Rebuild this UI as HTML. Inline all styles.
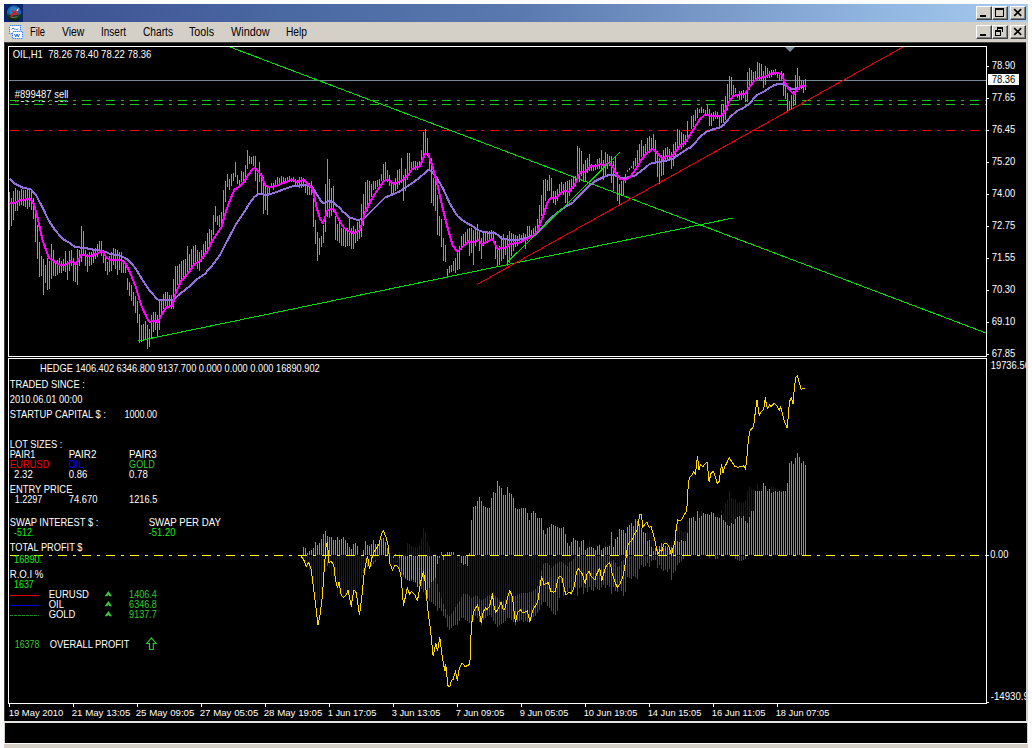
<!DOCTYPE html>
<html lang="en">
<head>
<meta charset="utf-8">
<title>MetaTrader - OIL,H1</title>
<style>
html,body{margin:0;padding:0;background:#fcfcfc;}
body{width:1032px;height:748px;overflow:hidden;position:relative;font-family:"Liberation Sans",sans-serif;}
.win{position:absolute;left:4px;top:4px;width:1024px;height:744px;background:#d4d0c8;overflow:hidden;}
.title{position:absolute;left:0;top:0;width:1024px;height:18px;background:linear-gradient(90deg,#3b5090 0px,#445c9a 150px,#4b6aa4 300px,#5a79af 516px,#7898c8 700px,#8fb4de 860px,#a6caf0 1024px);}
.appicon{position:absolute;left:0;top:0;width:19px;height:18px;background:#0a2472;}
.menubar{position:absolute;left:0;top:18px;width:1024px;height:20px;background:#d4d0c8;}
.menubar span{position:absolute;top:4px;font-size:12px;line-height:14px;color:#000;white-space:nowrap;}
.btn{position:absolute;width:16px;height:14px;background:#d4d0c8;box-sizing:border-box;border:1px solid;border-color:#fff #404040 #404040 #fff;box-shadow:inset -1px -1px 0 #808080;}
.client{position:absolute;left:0;top:38px;width:1022px;height:679px;background:#000;border-left:1px solid #404040;box-sizing:border-box;}
.clienttop{position:absolute;left:0;top:38px;width:1022px;height:1px;background:#404040;}
.sep{position:absolute;left:0;top:717px;width:1024px;height:2px;background:#e6e4de;}
.status{position:absolute;left:1px;top:719px;width:1022px;height:20px;background:#000;}
.statusline{position:absolute;left:0;top:739px;width:1024px;height:1px;background:#fff;}
svg{position:absolute;left:0;top:0;}
svg text{font-family:"Liberation Sans",sans-serif;}
</style>
</head>
<body>
<div class="win">
  <div class="title">
    <div class="appicon">
      <svg width="19" height="18" viewBox="0 0 19 18">
        <circle cx="9.800" cy="8.800" r="8" fill="#0a1230"/>
        <circle cx="10" cy="8.600" r="7.300" fill="#1a62ae"/>
        <circle cx="9.500" cy="7" r="4" fill="#2a86c8" opacity="0.8"/>
        <path d="M2.400 9.800q7.500 3 15.200 0a7.600 7.600 0 0 1-15.200 0z" fill="#0b3f20"/>
        <path d="M3 12.500q7 4.500 13.500 1l-1.500 2.200q-5 2.600-10-0.200z" fill="#06240f"/>
        <path d="M5.600 12.800l3.600-4.200-2.800-3 3.900 1.900 3.900-3.600-2.100 4.500 3.100 3.200-4.300-1.400-2.600 2.300z" fill="#e41414"/>
        <path d="M12.200 6.400l2.800-2.800-1.200 3.600z" fill="#ffffff"/>
        <path d="M7 13.200q3 0.800 6.500-0.600" stroke="#8a7a7a" stroke-width="0.800" fill="none"/>
      </svg>
    </div>
    <div class="btn" style="left:972px;top:2px"><svg width="14" height="12"><rect x="3" y="8" width="6" height="2" fill="#000"/></svg></div>
    <div class="btn" style="left:988px;top:2px"><svg width="14" height="12"><path d="M2 1h9v9h-9zM3 3v6h7v-6z" fill="#000" fill-rule="evenodd"/></svg></div>
    <div class="btn" style="left:1006px;top:2px"><svg width="14" height="12"><path d="M3.200 2.200l7 6.600M10.200 2.200l-7 6.600" stroke="#000" stroke-width="1.700" fill="none"/></svg></div>
  </div>
  <div class="menubar">
    <svg width="20" height="18" style="left:4px;top:2px" viewBox="0 0 20 18">
      <rect x="1.500" y="1.500" width="11" height="8" fill="#fff" stroke="#3c84ff" stroke-dasharray="1 1" shape-rendering="crispEdges"/>
      <rect x="1.500" y="1.500" width="11" height="8" fill="none" stroke="#9cc4ff" stroke-dasharray="1 1" stroke-dashoffset="1" shape-rendering="crispEdges"/>
      <path d="M3.500 5.500l1.500-1.500 1.500 1.500M7 4.500l1.500 1.500 1.500-1.500" stroke="#3a78e8" fill="none"/>
      <rect x="4.500" y="7.500" width="10" height="7" fill="#fff" stroke="#3c84ff" stroke-dasharray="1 1" shape-rendering="crispEdges"/>
      <rect x="4.500" y="7.500" width="10" height="7" fill="none" stroke="#9cc4ff" stroke-dasharray="1 1" stroke-dashoffset="1" shape-rendering="crispEdges"/>
      <path d="M6.500 10l1.200 3 1.300-3 1.300 3 1.200-3" stroke="#2a68e0" fill="none"/>
    </svg>
    <span style="left:26.4px;width:15.0px" class="mi"><svg width="17" height="16" style="overflow:visible"><text x="0" y="10.2" font-size="12.3" textLength="15.0" lengthAdjust="spacingAndGlyphs">File</text></svg></span>
    <span style="left:58.4px;width:22.3px" class="mi"><svg width="24" height="16" style="overflow:visible"><text x="0" y="10.2" font-size="12.3" textLength="22.3" lengthAdjust="spacingAndGlyphs">View</text></svg></span>
    <span style="left:97.4px;width:25.0px" class="mi"><svg width="27" height="16" style="overflow:visible"><text x="0" y="10.2" font-size="12.3" textLength="25.0" lengthAdjust="spacingAndGlyphs">Insert</text></svg></span>
    <span style="left:138.6px;width:30.0px" class="mi"><svg width="32" height="16" style="overflow:visible"><text x="0" y="10.2" font-size="12.3" textLength="30.0" lengthAdjust="spacingAndGlyphs">Charts</text></svg></span>
    <span style="left:185.3px;width:25.0px" class="mi"><svg width="27" height="16" style="overflow:visible"><text x="0" y="10.2" font-size="12.3" textLength="25.0" lengthAdjust="spacingAndGlyphs">Tools</text></svg></span>
    <span style="left:226.9px;width:38.7px" class="mi"><svg width="40" height="16" style="overflow:visible"><text x="0" y="10.2" font-size="12.3" textLength="38.7" lengthAdjust="spacingAndGlyphs">Window</text></svg></span>
    <span style="left:282.2px;width:21.0px" class="mi"><svg width="23" height="16" style="overflow:visible"><text x="0" y="10.2" font-size="12.3" textLength="21.0" lengthAdjust="spacingAndGlyphs">Help</text></svg></span>
    <div class="btn" style="left:972px;top:3px"><svg width="14" height="12"><rect x="3" y="8" width="6" height="2" fill="#000"/></svg></div>
    <div class="btn" style="left:988px;top:3px"><svg width="14" height="12"><path d="M4 1h6v5h-1v-3h-4v1h-1zM2 4h6v6h-6zM3 6v3h4v-3z" fill="#000" fill-rule="evenodd"/></svg></div>
    <div class="btn" style="left:1006px;top:3px"><svg width="14" height="12"><path d="M3.200 2.200l7 6.600M10.200 2.200l-7 6.600" stroke="#000" stroke-width="1.700" fill="none"/></svg></div>
  </div>
  <div class="client"></div>
  <div class="clienttop"></div>
  <div class="sep"></div>
  <div class="status"></div>
  <div class="statusline"></div>
</div>
<svg width="1032" height="748" viewBox="0 0 1032 748" font-family="Liberation Sans, sans-serif">
<g shape-rendering="crispEdges">
<rect x="9" y="80" width="977" height="1" fill="#778899"/>
<line x1="10" y1="100.5" x2="986" y2="100.5" stroke="#22c022" stroke-width="1" stroke-dasharray="9 6 3 6"/>
<line x1="10" y1="104.5" x2="986" y2="104.5" stroke="#22c022" stroke-width="1" stroke-dasharray="9 6 3 6"/>
<line x1="10" y1="130.5" x2="986" y2="130.5" stroke="#ff0000" stroke-width="1" stroke-dasharray="9 6 3 6"/>
</g>
<clipPath id="c1"><rect x="9" y="47" width="977" height="309"/></clipPath>
<clipPath id="c2"><rect x="9" y="359" width="977" height="344"/></clipPath>
<g clip-path="url(#c1)">
<path d="M9 192v38h1v-38zM11 198v28h1v-28zM13 191v29h1v-29zM15 188v23h1v-23zM17 190v21h1v-21zM19 191v15h1v-15zM21 189v16h1v-16zM23 190v16h1v-16zM25 190v17h1v-17zM27 188v21h1v-21zM29 190v17h1v-17zM31 189v21h1v-21zM33 198v21h1v-21zM35 210v32h1v-32zM37 225v34h1v-34zM39 242v35h1v-35zM41 256v20h1v-20zM43 259v36h1v-36zM45 265v18h1v-18zM47 258v32h1v-32zM49 261v28h1v-28zM51 244v35h1v-35zM53 250v26h1v-26zM55 262v14h1v-14zM57 260v15h1v-15zM59 258v15h1v-15zM61 261v12h1v-12zM63 259v12h1v-12zM65 251v21h1v-21zM67 261v19h1v-19zM69 251v20h1v-20zM71 250v16h1v-16zM73 258v23h1v-23zM75 264v18h1v-18zM77 249v36h1v-36zM79 250v16h1v-16zM81 226v36h1v-36zM83 231v24h1v-24zM85 250v16h1v-16zM87 254v18h1v-18zM89 252v14h1v-14zM91 252v13h1v-13zM93 251v12h1v-12zM95 248v11h1v-11zM97 244v13h1v-13zM99 241v12h1v-12zM101 241v15h1v-15zM103 250v13h1v-13zM105 258v13h1v-13zM107 262v13h1v-13zM109 256v16h1v-16zM111 252v19h1v-19zM113 248v17h1v-17zM115 249v20h1v-20zM117 250v25h1v-25zM119 252v18h1v-18zM121 252v21h1v-21zM123 260v13h1v-13zM125 262v11h1v-11zM127 278v12h1v-12zM129 282v14h1v-14zM131 285v16h1v-16zM133 292v14h1v-14zM135 296v17h1v-17zM137 301v22h1v-22zM139 314v29h1v-29zM141 325v17h1v-17zM143 324v17h1v-17zM145 321v18h1v-18zM147 325v24h1v-24zM149 329v18h1v-18zM151 315v24h1v-24zM153 312v20h1v-20zM155 312v18h1v-18zM157 315v22h1v-22zM159 301v29h1v-29zM161 300v16h1v-16zM163 294v15h1v-15zM165 292v14h1v-14zM167 292v14h1v-14zM169 295v11h1v-11zM171 295v14h1v-14zM173 279v30h1v-30zM175 266v27h1v-27zM177 266v19h1v-19zM179 264v19h1v-19zM181 261v20h1v-20zM183 260v17h1v-17zM185 259v17h1v-17zM187 246v29h1v-29zM189 254v17h1v-17zM191 249v18h1v-18zM193 246v20h1v-20zM195 245v20h1v-20zM197 250v19h1v-19zM199 252v19h1v-19zM201 250v12h1v-12zM203 244v15h1v-15zM205 241v14h1v-14zM207 233v18h1v-18zM209 229v17h1v-17zM211 230v12h1v-12zM213 215v20h1v-20zM215 206v16h1v-16zM217 216v9h1v-9zM219 215v12h1v-12zM221 212v13h1v-13zM223 190v29h1v-29zM225 181v21h1v-21zM227 174v13h1v-13zM229 179v11h1v-11zM231 174v12h1v-12zM233 173v8h1v-8zM235 162v15h1v-15zM237 175v9h1v-9zM239 180v6h1v-6zM241 171v11h1v-11zM243 172v11h1v-11zM245 165v17h1v-17zM247 150v19h1v-19zM249 156v8h1v-8zM251 157v7h1v-7zM253 156v10h1v-10zM255 156v25h1v-25zM257 173v21h1v-21zM259 162v20h1v-20zM261 173v20h1v-20zM263 177v37h1v-37zM265 185v25h1v-25zM267 185v30h1v-30zM269 187v8h1v-8zM271 183v5h1v-5zM273 183v7h1v-7zM275 180v7h1v-7zM277 177v9h1v-9zM279 178v6h1v-6zM281 176v8h1v-8zM283 177v6h1v-6zM285 178v4h1v-4zM287 177v5h1v-5zM289 176v6h1v-6zM291 178v4h1v-4zM293 177v5h1v-5zM295 179v7h1v-7zM297 180v7h1v-7zM299 177v11h1v-11zM301 177v11h1v-11zM303 178v9h1v-9zM305 185v8h1v-8zM307 186v9h1v-9zM309 183v12h1v-12zM311 181v14h1v-14zM313 198v29h1v-29zM315 220v24h1v-24zM317 232v29h1v-29zM319 238v17h1v-17zM321 236v11h1v-11zM323 225v18h1v-18zM325 184v48h1v-48zM327 159v58h1v-58zM329 179v39h1v-39zM331 188v28h1v-28zM333 186v26h1v-26zM335 216v24h1v-24zM337 224v17h1v-17zM339 222v21h1v-21zM341 228v18h1v-18zM343 226v20h1v-20zM345 229v18h1v-18zM347 228v18h1v-18zM349 218v28h1v-28zM351 228v21h1v-21zM353 226v23h1v-23zM355 229v14h1v-14zM357 222v19h1v-19zM359 220v19h1v-19zM361 204v33h1v-33zM363 194v32h1v-32zM365 182v31h1v-31zM367 180v31h1v-31zM369 181v22h1v-22zM371 184v13h1v-13zM373 181v9h1v-9zM375 181v8h1v-8zM377 180v7h1v-7zM379 179v7h1v-7zM381 174v7h1v-7zM383 164v19h1v-19zM385 162v17h1v-17zM387 170v12h1v-12zM389 175v11h1v-11zM391 182v13h1v-13zM393 184v9h1v-9zM395 178v13h1v-13zM397 170v19h1v-19zM399 169v16h1v-16zM401 158v25h1v-25zM403 175v26h1v-26zM405 169v22h1v-22zM407 153v27h1v-27zM409 153v20h1v-20zM411 162v9h1v-9zM413 161v9h1v-9zM415 161v9h1v-9zM417 162v8h1v-8zM419 161v6h1v-6zM421 150v15h1v-15zM423 132v28h1v-28zM425 129v24h1v-24zM427 138v18h1v-18zM429 156v13h1v-13zM431 158v45h1v-45zM433 178v28h1v-28zM435 180v31h1v-31zM437 195v40h1v-40zM439 216v20h1v-20zM441 219v28h1v-28zM443 238v23h1v-23zM445 245v17h1v-17zM447 269v7h1v-7zM449 266v7h1v-7zM451 265v7h1v-7zM453 261v10h1v-10zM455 258v15h1v-15zM457 252v18h1v-18zM459 246v23h1v-23zM461 236v14h1v-14zM463 234v13h1v-13zM465 232v14h1v-14zM467 229v14h1v-14zM469 228v28h1v-28zM471 228v25h1v-25zM473 230v35h1v-35zM475 229v17h1v-17zM477 224v18h1v-18zM479 230v21h1v-21zM481 238v21h1v-21zM483 232v14h1v-14zM485 231v12h1v-12zM487 232v11h1v-11zM489 231v10h1v-10zM491 230v10h1v-10zM493 231v12h1v-12zM495 241v18h1v-18zM497 250v16h1v-16zM499 246v19h1v-19zM501 236v25h1v-25zM503 234v25h1v-25zM505 238v17h1v-17zM507 235v31h1v-31zM509 231v32h1v-32zM511 233v23h1v-23zM513 234v17h1v-17zM515 235v12h1v-12zM517 236v10h1v-10zM519 234v9h1v-9zM521 235v8h1v-8zM523 233v8h1v-8zM525 234v15h1v-15zM527 226v15h1v-15zM529 226v13h1v-13zM531 230v9h1v-9zM533 228v8h1v-8zM535 226v9h1v-9zM537 219v13h1v-13zM539 205v24h1v-24zM541 195v21h1v-21zM543 180v31h1v-31zM545 179v22h1v-22zM547 180v11h1v-11zM549 175v16h1v-16zM551 178v19h1v-19zM553 191v12h1v-12zM555 191v14h1v-14zM557 189v12h1v-12zM559 184v12h1v-12zM561 182v11h1v-11zM563 184v11h1v-11zM565 182v21h1v-21zM567 181v24h1v-24zM569 180v16h1v-16zM571 179v12h1v-12zM573 176v13h1v-13zM575 176v10h1v-10zM577 146v35h1v-35zM579 148v34h1v-34zM581 151v25h1v-25zM583 164v18h1v-18zM585 160v22h1v-22zM587 158v15h1v-15zM589 154v17h1v-17zM591 164v7h1v-7zM593 165v6h1v-6zM595 164v6h1v-6zM597 159v10h1v-10zM599 158v11h1v-11zM601 150v21h1v-21zM603 160v20h1v-20zM605 152v23h1v-23zM607 154v15h1v-15zM609 156v10h1v-10zM611 156v27h1v-27zM613 161v30h1v-30zM615 157v20h1v-20zM617 172v29h1v-29zM619 184v22h1v-22zM621 181v15h1v-15zM623 178v17h1v-17zM625 174v9h1v-9zM627 170v2h1v-2zM629 168v2h1v-2zM631 166v2h1v-2zM633 161v8h1v-8zM635 158v8h1v-8zM637 150v15h1v-15zM639 144v17h1v-17zM641 140v17h1v-17zM643 146v10h1v-10zM645 144v9h1v-9zM647 138v14h1v-14zM649 136v17h1v-17zM651 138v13h1v-13zM653 134v16h1v-16zM655 140v21h1v-21zM657 151v26h1v-26zM659 158v26h1v-26zM661 155v21h1v-21zM663 150v25h1v-25zM665 148v12h1v-12zM667 147v12h1v-12zM669 149v10h1v-10zM671 152v17h1v-17zM673 144v22h1v-22zM675 142v14h1v-14zM677 129v22h1v-22zM679 130v17h1v-17zM681 132v17h1v-17zM683 134v13h1v-13zM685 135v10h1v-10zM687 121v21h1v-21zM691 116v13h1v-13zM693 115v12h1v-12zM695 110v11h1v-11zM697 108v10h1v-10zM699 109v4h1v-4zM701 107v6h1v-6zM703 109v4h1v-4zM705 110v5h1v-5zM707 105v11h1v-11zM709 109v17h1v-17zM711 113v13h1v-13zM713 112v9h1v-9zM715 111v8h1v-8zM717 112v7h1v-7zM719 116v11h1v-11zM721 104v19h1v-19zM723 104v19h1v-19zM725 96v24h1v-24zM727 84v26h1v-26zM729 76v23h1v-23zM731 77v18h1v-18zM733 85v11h1v-11zM735 88v5h1v-5zM737 94v4h1v-4zM739 91v9h1v-9zM741 91v9h1v-9zM743 90v8h1v-8zM745 94v8h1v-8zM747 72v30h1v-30zM749 68v22h1v-22zM751 70v14h1v-14zM753 72v10h1v-10zM755 71v9h1v-9zM757 62v18h1v-18zM759 63v17h1v-17zM761 64v17h1v-17zM763 71v17h1v-17zM765 66v19h1v-19zM767 68v10h1v-10zM769 71v7h1v-7zM771 70v7h1v-7zM773 70v5h1v-5zM775 69v6h1v-6zM777 72v6h1v-6zM779 73v8h1v-8zM781 71v10h1v-10zM783 73v23h1v-23zM785 84v15h1v-15zM787 93v18h1v-18zM789 101v9h1v-9zM791 95v14h1v-14zM793 91v15h1v-15zM795 75v30h1v-30zM797 68v24h1v-24zM799 76v14h1v-14zM801 81v8h1v-8zM803 80v13h1v-13zM805 79v11h1v-11z" fill="#00ff00"/>
<line x1="230" y1="47" x2="986" y2="333" stroke="#00e000" stroke-width="1" shape-rendering="crispEdges"/>
<line x1="138" y1="341" x2="733" y2="218" stroke="#00e000" stroke-width="1" shape-rendering="crispEdges"/>
<line x1="477" y1="284.5" x2="903" y2="47" stroke="#f00000" stroke-width="1" shape-rendering="crispEdges"/>
<polyline points="9.5,178.8 15.0,183.8 22.5,187.5 31.0,189.5 36.0,195.0 42.5,207.5 49.0,221.0 55.0,230.0 62.5,238.8 69.0,242.5 75.0,247.0 85.0,248.0 95.0,250.0 102.5,250.8 110.0,253.8 120.0,255.5 127.5,259.5 135.0,267.5 142.5,280.0 150.0,291.0 157.5,299.5 165.0,300.0 172.5,300.5 180.0,293.8 190.0,286.0 197.5,278.8 205.0,273.8 212.5,265.0 220.0,255.0 227.1,241.1 235.3,225.5 243.4,213.3 250.2,202.4 254.3,197.0 258.3,194.3 261.7,193.6 265.1,195.4 270.6,194.0 276.0,192.2 281.4,190.2 286.8,188.2 292.3,186.5 297.7,185.9 303.1,184.8 308.5,185.5 312.6,187.5 316.7,194.3 320.1,199.7 322.8,203.1 326.2,202.4 328.9,201.1 333.6,202.4 337.0,205.8 340.0,207.8 342.5,211.2 350.0,217.5 357.5,220.0 363.8,218.8 370.0,212.5 377.5,205.0 385.0,197.5 392.5,194.5 400.0,191.2 407.5,186.2 415.0,181.2 422.5,175.0 428.8,169.5 435.0,175.0 442.5,187.5 450.0,203.8 457.5,216.2 465.0,222.0 472.5,226.2 480.0,231.2 487.5,232.5 495.0,233.0 502.5,238.8 510.0,240.0 520.0,239.5 527.5,237.5 535.0,235.0 542.5,227.5 550.0,218.8 557.5,212.5 565.0,207.0 572.5,203.0 580.0,195.0 587.5,187.5 595.0,181.2 602.5,177.5 608.8,175.0 615.0,175.5 621.2,178.0 627.5,177.5 635.0,175.5 642.5,170.0 650.0,163.8 657.5,162.0 665.0,161.2 672.5,158.8 680.0,153.8 687.5,148.8 690.0,147.9 694.6,143.2 700.9,136.2 707.0,131.6 713.2,129.3 719.5,127.7 724.1,124.6 730.3,116.9 736.5,111.4 742.7,108.3 747.4,105.2 752.0,100.6 756.7,95.2 762.9,92.1 769.0,88.2 773.7,85.5 779.1,83.5 783.0,84.0 786.9,86.2 790.8,88.7 795.4,89.0 800.0,87.1 805.5,85.9" fill="none" stroke="#9370db" stroke-width="2" stroke-linejoin="round" shape-rendering="crispEdges"/>
<polyline points="9.5,203.0 15.0,202.5 21.0,200.0 30.0,198.8 34.0,203.8 37.5,217.5 42.5,240.0 49.0,258.0 54.0,261.0 60.0,265.0 66.0,264.5 71.0,261.0 76.0,264.5 81.0,255.0 86.0,255.5 92.5,255.5 99.0,252.5 102.5,251.0 106.0,257.0 110.0,260.0 120.0,260.0 125.0,262.5 130.0,272.5 136.0,287.5 141.0,305.0 147.5,319.0 150.0,322.0 155.0,320.5 157.5,322.5 161.0,316.0 166.0,307.5 172.5,306.0 175.0,295.0 181.0,281.0 187.5,274.0 195.0,263.8 200.0,261.0 207.5,251.0 212.2,241.1 221.7,226.8 223.7,218.7 227.1,207.8 231.2,197.0 234.6,189.5 239.3,186.8 243.4,182.7 247.5,176.0 251.6,170.5 255.0,167.8 258.3,171.2 261.7,176.0 265.1,184.8 267.8,186.8 273.3,186.8 278.7,184.8 284.1,182.7 289.6,180.7 293.0,179.8 297.0,182.1 300.4,180.7 303.1,179.6 307.2,183.1 311.3,186.8 314.0,194.3 316.7,207.8 320.1,218.7 322.8,223.4 324.8,218.7 326.9,210.6 330.3,208.9 334.3,209.5 337.0,216.0 340.0,221.4 343.8,227.5 350.0,232.0 355.0,233.0 360.0,230.0 365.0,212.5 371.2,200.0 377.5,190.0 383.8,181.2 387.5,179.5 393.8,183.8 400.0,181.2 406.2,177.5 412.5,168.8 420.0,166.2 425.0,153.8 428.0,153.8 432.5,166.2 437.5,185.0 442.5,207.5 447.5,227.5 452.5,245.0 457.5,252.0 462.5,247.0 468.8,241.2 473.8,242.5 478.8,240.0 482.5,244.5 487.5,241.2 492.5,238.8 497.5,248.8 502.5,248.0 506.2,247.5 510.0,243.8 517.5,243.0 525.0,240.0 532.5,236.2 537.5,231.2 542.5,217.5 547.5,202.5 551.2,197.5 556.2,198.0 561.2,192.5 565.0,190.5 568.8,192.0 573.8,186.2 577.5,178.8 580.0,172.5 585.0,172.0 591.2,166.2 596.2,166.2 600.0,163.8 603.8,165.5 608.8,162.5 612.5,166.2 616.2,173.8 620.0,178.8 625.0,180.0 630.0,177.0 636.2,168.8 641.2,160.0 647.5,152.5 653.0,148.8 657.5,153.8 662.5,158.8 667.5,155.5 671.2,157.0 675.0,152.5 680.0,146.2 686.2,141.2 690.0,134.7 694.6,127.7 699.3,120.0 704.0,115.6 707.8,114.5 711.7,116.5 716.4,116.1 721.0,116.5 724.9,112.2 728.8,102.1 733.4,95.9 739.6,94.4 745.0,94.4 748.1,89.0 752.0,83.5 756.7,78.9 761.3,77.3 766.0,76.2 770.6,74.2 775.2,72.4 779.9,73.8 782.2,75.0 784.6,82.0 789.2,89.7 793.9,94.4 796.2,90.5 800.0,86.6 805.5,85.5" fill="none" stroke="#ff00ff" stroke-width="2" stroke-linejoin="round" shape-rendering="crispEdges"/>
<line x1="508" y1="261.5" x2="619.5" y2="152.5" stroke="#00e000" stroke-width="1" shape-rendering="crispEdges"/>
</g>
<clipPath id="c3"><rect x="14" y="101" width="56" height="2"/></clipPath>
<text x="14.7" y="102" fill="#ffffff" font-size="10.2" textLength="53.7" lengthAdjust="spacingAndGlyphs" clip-path="url(#c3)">#899487 sell</text>
<path d="M785 47h10l-5 5z" fill="#778899"/>
<g clip-path="url(#c2)">
<path d="M303 556v5h1v-5zM305 556v8h1v-8zM307 556v10h1v-10zM309 556v11h1v-11zM311 556v11h1v-11zM313 556v11h1v-11zM315 556v12h1v-12zM317 556v12h1v-12zM319 556v13h1v-13zM321 556v13h1v-13zM323 556v14h1v-14zM325 556v13h1v-13zM327 556v10h1v-10zM329 556v10h1v-10zM331 556v11h1v-11zM333 556v11h1v-11zM335 556v12h1v-12zM337 556v12h1v-12zM339 556v12h1v-12zM341 556v13h1v-13zM343 556v13h1v-13zM345 556v13h1v-13zM347 556v14h1v-14zM349 556v14h1v-14zM351 556v14h1v-14zM353 556v15h1v-15zM355 556v15h1v-15zM357 556v16h1v-16zM359 556v16h1v-16zM361 556v16h1v-16zM363 556v17h1v-17zM365 556v15h1v-15zM367 556v11h1v-11zM369 556v12h1v-12zM371 556v10h1v-10zM373 556v8h1v-8zM375 556v6h1v-6zM377 556v3h1v-3zM397 556v6h1v-6zM399 556v13h1v-13zM401 556v19h1v-19zM403 556v21h1v-21zM405 556v23h1v-23zM407 556v23h1v-23zM409 556v24h1v-24zM411 556v25h1v-25zM413 556v26h1v-26zM415 556v27h1v-27zM417 556v28h1v-28zM419 556v31h1v-31zM421 556v33h1v-33zM423 556v36h1v-36zM425 556v39h1v-39zM427 556v43h1v-43zM429 556v45h1v-45zM431 556v46h1v-46zM433 556v48h1v-48zM435 556v50h1v-50zM437 556v55h1v-55zM439 556v52h1v-52zM441 556v55h1v-55zM443 556v60h1v-60zM445 556v62h1v-62zM447 556v71h1v-71zM449 556v74h1v-74zM451 556v72h1v-72zM453 556v70h1v-70zM455 556v69h1v-69zM457 556v69h1v-69zM459 556v65h1v-65zM461 556v62h1v-62zM463 556v62h1v-62zM465 556v64h1v-64zM467 556v65h1v-65zM469 556v67h1v-67zM471 556v67h1v-67zM473 556v64h1v-64zM475 556v60h1v-60zM477 556v62h1v-62zM479 556v66h1v-66zM481 556v69h1v-69zM483 556v64h1v-64zM485 556v62h1v-62zM487 556v60h1v-60zM489 556v59h1v-59zM491 556v61h1v-61zM493 556v65h1v-65zM495 556v68h1v-68zM497 556v71h1v-71zM499 556v69h1v-69zM501 556v68h1v-68zM503 556v67h1v-67zM505 556v65h1v-65zM507 556v62h1v-62zM509 556v62h1v-62zM511 556v64h1v-64zM513 556v66h1v-66zM515 556v69h1v-69zM517 556v66h1v-66zM519 556v65h1v-65zM521 556v64h1v-64zM523 556v66h1v-66zM525 556v65h1v-65zM527 556v66h1v-66zM529 556v67h1v-67zM531 556v63h1v-63zM533 556v61h1v-61zM535 556v60h1v-60zM537 556v57h1v-57zM539 556v54h1v-54zM541 556v49h1v-49zM543 556v46h1v-46zM545 556v46h1v-46zM547 556v50h1v-50zM549 556v52h1v-52zM551 556v55h1v-55zM553 556v58h1v-58zM555 556v59h1v-59zM557 556v55h1v-55zM559 556v42h1v-42zM561 556v27h1v-27zM563 556v40h1v-40zM565 556v31h1v-31zM567 556v36h1v-36zM569 556v32h1v-32zM571 556v39h1v-39zM573 556v34h1v-34zM575 556v32h1v-32zM577 556v40h1v-40zM579 556v32h1v-32zM581 556v31h1v-31zM583 556v38h1v-38zM585 556v32h1v-32zM587 556v36h1v-36zM589 556v31h1v-31zM591 556v34h1v-34zM593 556v35h1v-35zM595 556v31h1v-31zM597 556v33h1v-33zM599 556v34h1v-34zM601 556v31h1v-31zM603 556v29h1v-29zM605 556v32h1v-32zM607 556v29h1v-29zM609 556v31h1v-31zM611 556v38h1v-38zM613 556v31h1v-31zM615 556v35h1v-35zM617 556v36h1v-36zM619 556v29h1v-29zM621 556v35h1v-35zM623 556v40h1v-40zM625 556v36h1v-36zM627 556v21h1v-21zM629 556v22h1v-22zM631 556v23h1v-23zM633 556v20h1v-20zM635 556v21h1v-21zM637 556v23h1v-23zM639 556v13h1v-13zM641 556v9h1v-9zM643 556v11h1v-11zM645 556v10h1v-10zM647 556v7h1v-7zM649 556v11h1v-11zM651 556v5h1v-5zM653 556v4h1v-4zM655 556v4h1v-4zM657 556v12h1v-12zM659 556v9h1v-9zM661 556v13h1v-13zM663 556v15h1v-15zM665 556v14h1v-14zM667 556v16h1v-16zM669 556v13h1v-13zM671 556v24h1v-24zM673 556v17h1v-17zM675 556v15h1v-15zM677 556v9h1v-9zM679 556v7h1v-7zM681 556v5h1v-5zM683 556v3h1v-3zM709 556v2h1v-2zM715 556v3h1v-3zM717 556v3h1v-3zM735 556v3h1v-3zM737 556v4h1v-4zM739 556v5h1v-5zM741 556v5h1v-5zM743 556v4h1v-4zM745 556v3h1v-3z" fill="#ff0000"/>
<path d="M303 556v2h1v-2zM305 556v7h1v-7zM307 556v12h1v-12zM309 556v16h1v-16zM311 556v24h1v-24zM313 556v33h1v-33zM315 556v41h1v-41zM317 556v48h1v-48zM319 556v44h1v-44zM321 556v36h1v-36zM323 556v24h1v-24zM325 556v14h1v-14zM327 556v6h1v-6zM329 556v13h1v-13zM331 556v20h1v-20zM333 556v23h1v-23zM335 556v29h1v-29zM337 556v40h1v-40zM339 556v38h1v-38zM341 556v40h1v-40zM343 556v41h1v-41zM345 556v40h1v-40zM347 556v39h1v-39zM349 556v43h1v-43zM351 556v45h1v-45zM353 556v39h1v-39zM355 556v35h1v-35zM357 556v32h1v-32zM359 556v29h1v-29zM361 556v22h1v-22zM363 556v14h1v-14zM365 556v10h1v-10zM367 556v7h1v-7zM369 556v9h1v-9zM371 556v7h1v-7zM373 556v5h1v-5zM375 556v4h1v-4zM377 556v4h1v-4zM379 556v2h1v-2zM391 556v8h1v-8zM393 556v9h1v-9zM395 556v7h1v-7zM397 556v5h1v-5zM399 552v3h1v-3zM405 554v1h1v-1zM407 543v12h1v-12zM409 544v11h1v-11zM411 546v9h1v-9zM413 547v8h1v-8zM415 547v8h1v-8zM417 547v8h1v-8zM419 545v10h1v-10zM421 538v17h1v-17zM423 528v27h1v-27zM425 532v23h1v-23zM427 542v13h1v-13zM429 546v9h1v-9zM435 556v2h1v-2zM437 556v28h1v-28zM439 556v36h1v-36zM441 556v43h1v-43zM443 556v48h1v-48zM445 556v53h1v-53zM447 556v59h1v-59zM449 556v60h1v-60zM451 556v58h1v-58zM453 556v55h1v-55zM455 556v51h1v-51zM457 556v48h1v-48zM459 556v45h1v-45zM461 556v41h1v-41zM463 556v38h1v-38zM465 556v38h1v-38zM467 556v38h1v-38zM469 556v40h1v-40zM471 556v42h1v-42zM473 556v41h1v-41zM475 556v40h1v-40zM477 556v40h1v-40zM479 556v43h1v-43zM481 556v44h1v-44zM483 556v43h1v-43zM485 556v42h1v-42zM487 556v40h1v-40zM489 556v39h1v-39zM491 556v38h1v-38zM493 556v39h1v-39zM495 556v40h1v-40zM497 556v42h1v-42zM499 556v44h1v-44zM501 556v45h1v-45zM503 556v45h1v-45zM505 556v43h1v-43zM507 556v41h1v-41zM509 556v39h1v-39zM511 556v39h1v-39zM513 556v40h1v-40zM515 556v40h1v-40zM517 556v39h1v-39zM519 556v38h1v-38zM521 556v37h1v-37zM523 556v37h1v-37zM525 556v37h1v-37zM527 556v37h1v-37zM529 556v36h1v-36zM531 556v36h1v-36zM533 556v35h1v-35zM535 556v33h1v-33zM537 556v30h1v-30zM539 556v24h1v-24zM541 556v14h1v-14zM543 556v8h1v-8zM545 556v7h1v-7zM547 556v7h1v-7zM549 556v9h1v-9zM551 556v12h1v-12zM553 556v10h1v-10zM555 556v8h1v-8zM557 556v7h1v-7zM559 556v6h1v-6zM561 556v6h1v-6zM563 556v7h1v-7zM565 556v9h1v-9zM567 556v10h1v-10zM569 556v6h1v-6zM571 556v5h1v-5zM573 556v3h1v-3zM575 553v2h1v-2zM577 540v15h1v-15zM579 543v12h1v-12zM585 550v5h1v-5zM587 546v9h1v-9zM589 541v14h1v-14zM597 546v9h1v-9zM599 544v11h1v-11zM605 542v13h1v-13zM607 545v10h1v-10zM609 544v11h1v-11zM611 556v5h1v-5zM613 556v4h1v-4zM615 556v7h1v-7zM617 556v11h1v-11zM619 556v10h1v-10zM621 556v5h1v-5zM623 556v4h1v-4zM643 554v1h1v-1zM645 533v22h1v-22zM647 532v23h1v-23zM649 533v22h1v-22zM651 532v23h1v-23zM653 538v17h1v-17zM655 545v10h1v-10zM663 539v16h1v-16zM665 538v17h1v-17zM667 539v16h1v-16zM669 543v12h1v-12zM671 541v14h1v-14zM673 537v18h1v-18zM675 529v26h1v-26zM677 527v28h1v-28zM679 527v28h1v-28zM681 531v24h1v-24zM683 532v23h1v-23zM685 531v24h1v-24zM687 521v34h1v-34zM689 518v37h1v-37zM691 517v38h1v-38zM693 517v38h1v-38zM695 518v37h1v-37zM697 514v41h1v-41zM699 512v43h1v-43zM701 511v44h1v-44zM703 513v42h1v-42zM705 514v41h1v-41zM707 513v42h1v-42zM709 515v40h1v-40zM711 514v41h1v-41zM713 514v41h1v-41zM715 515v40h1v-40zM717 517v38h1v-38zM719 517v38h1v-38zM721 510v45h1v-45zM723 514v41h1v-41zM725 503v52h1v-52zM727 500v55h1v-55zM729 491v64h1v-64zM731 498v57h1v-57zM733 499v56h1v-56zM735 499v56h1v-56zM737 503v52h1v-52zM739 502v53h1v-53zM741 503v52h1v-52zM743 502v53h1v-53zM745 500v55h1v-55zM747 491v64h1v-64zM749 487v68h1v-68zM751 489v66h1v-66zM753 489v66h1v-66zM755 490v65h1v-65zM757 484v71h1v-71zM759 490v65h1v-65zM761 488v67h1v-67zM763 486v69h1v-69zM765 487v68h1v-68zM767 489v66h1v-66zM769 488v67h1v-67zM771 487v68h1v-68zM773 487v68h1v-68zM775 488v67h1v-67zM777 489v66h1v-66zM779 490v65h1v-65zM781 490v65h1v-65zM783 492v63h1v-63zM785 495v60h1v-60zM787 502v53h1v-53z" fill="#0000f4"/>
<path d="M303 547v8h1v-8zM305 548v7h1v-7zM307 553v2h1v-2zM309 551v4h1v-4zM311 550v5h1v-5zM313 548v7h1v-7zM315 542v13h1v-13zM317 545v10h1v-10zM319 543v12h1v-12zM321 539v16h1v-16zM323 534v21h1v-21zM325 531v24h1v-24zM327 536v19h1v-19zM329 537v18h1v-18zM331 537v18h1v-18zM333 540v15h1v-15zM335 540v15h1v-15zM337 537v18h1v-18zM339 540v15h1v-15zM341 539v16h1v-16zM343 537v18h1v-18zM345 540v15h1v-15zM347 543v12h1v-12zM349 547v8h1v-8zM351 549v6h1v-6zM353 544v11h1v-11zM355 543v12h1v-12zM357 546v9h1v-9zM363 550v5h1v-5zM365 541v14h1v-14zM367 545v10h1v-10zM369 546v9h1v-9zM371 544v11h1v-11zM373 540v15h1v-15zM375 544v11h1v-11zM377 544v11h1v-11zM379 542v13h1v-13zM381 539v16h1v-16zM383 538v17h1v-17zM385 542v13h1v-13zM387 548v7h1v-7zM389 553v2h1v-2zM393 556v2h1v-2zM395 554v1h1v-1zM399 556v2h1v-2zM401 556v15h1v-15zM403 556v19h1v-19zM405 556v22h1v-22zM407 556v24h1v-24zM409 556v25h1v-25zM411 556v23h1v-23zM413 556v24h1v-24zM415 556v26h1v-26zM417 556v31h1v-31zM419 556v28h1v-28zM421 556v25h1v-25zM423 556v23h1v-23zM425 556v28h1v-28zM427 556v42h1v-42zM429 556v32h1v-32zM431 556v26h1v-26zM433 556v25h1v-25zM435 556v22h1v-22zM437 556v8h1v-8zM439 556v2h1v-2zM441 552v3h1v-3zM443 556v4h1v-4zM445 554v1h1v-1zM447 552v3h1v-3zM449 552v3h1v-3zM451 552v3h1v-3zM453 552v3h1v-3zM461 556v7h1v-7zM463 556v9h1v-9zM465 556v8h1v-8zM467 556v10h1v-10zM469 553v2h1v-2zM471 520v35h1v-35zM473 507v48h1v-48zM475 506v49h1v-49zM477 501v54h1v-54zM479 497v58h1v-58zM481 501v54h1v-54zM483 506v49h1v-49zM485 507v48h1v-48zM487 508v47h1v-47zM489 508v47h1v-47zM491 498v57h1v-57zM493 492v63h1v-63zM495 493v62h1v-62zM497 481v74h1v-74zM499 486v69h1v-69zM501 488v67h1v-67zM503 495v60h1v-60zM505 495v60h1v-60zM507 487v68h1v-68zM509 493v62h1v-62zM511 494v61h1v-61zM513 498v57h1v-57zM515 508v47h1v-47zM517 509v46h1v-46zM519 509v46h1v-46zM521 508v47h1v-47zM523 508v47h1v-47zM525 508v47h1v-47zM527 513v42h1v-42zM529 520v35h1v-35zM531 513v42h1v-42zM533 511v44h1v-44zM535 513v42h1v-42zM537 518v37h1v-37zM539 518v37h1v-37zM541 518v37h1v-37zM543 530v25h1v-25zM545 534v21h1v-21zM547 528v27h1v-27zM549 527v28h1v-28zM551 524v31h1v-31zM553 525v30h1v-30zM555 526v29h1v-29zM557 527v28h1v-28zM559 528v27h1v-27zM561 528v27h1v-27zM563 527v28h1v-28zM565 534v21h1v-21zM567 543v12h1v-12zM569 546v9h1v-9zM571 542v13h1v-13zM573 538v17h1v-17zM575 540v15h1v-15zM577 541v14h1v-14zM579 547v8h1v-8zM581 541v14h1v-14zM583 540v15h1v-15zM585 550v5h1v-5zM587 548v7h1v-7zM589 547v8h1v-8zM591 547v8h1v-8zM593 548v7h1v-7zM595 550v5h1v-5zM597 546v9h1v-9zM599 545v10h1v-10zM601 550v5h1v-5zM603 548v7h1v-7zM605 547v8h1v-8zM607 547v8h1v-8zM609 546v9h1v-9zM611 532v23h1v-23zM613 547v8h1v-8zM615 539v16h1v-16zM617 537v18h1v-18zM619 529v26h1v-26zM621 530v25h1v-25zM623 530v25h1v-25zM625 533v22h1v-22zM627 527v28h1v-28zM629 525v30h1v-30zM631 523v32h1v-32zM633 526v29h1v-29zM635 519v36h1v-36zM637 521v34h1v-34zM639 524v31h1v-31zM641 528v27h1v-27zM643 532v23h1v-23zM645 533v22h1v-22zM647 541v14h1v-14zM649 540v15h1v-15zM651 547v8h1v-8zM653 551v4h1v-4zM655 548v7h1v-7zM657 549v6h1v-6zM659 546v9h1v-9zM661 543v12h1v-12zM663 548v7h1v-7zM665 546v9h1v-9zM667 547v8h1v-8zM669 549v6h1v-6zM671 547v8h1v-8zM673 545v10h1v-10zM675 540v15h1v-15zM677 541v14h1v-14zM679 542v13h1v-13zM681 540v15h1v-15zM683 541v14h1v-14zM685 541v14h1v-14zM687 533v22h1v-22zM689 518v37h1v-37zM691 518v37h1v-37zM693 517v38h1v-38zM695 521v34h1v-34zM697 511v44h1v-44zM699 518v37h1v-37zM701 516v39h1v-39zM703 513v42h1v-42zM705 514v41h1v-41zM707 514v41h1v-41zM709 515v40h1v-40zM711 512v43h1v-43zM713 513v42h1v-42zM715 517v38h1v-38zM717 517v38h1v-38zM719 518v37h1v-37zM721 515v40h1v-40zM723 520v35h1v-35zM725 522v33h1v-33zM727 525v30h1v-30zM729 526v29h1v-29zM731 523v32h1v-32zM733 524v31h1v-31zM735 519v36h1v-36zM737 517v38h1v-38zM739 516v39h1v-39zM741 518v37h1v-37zM743 516v39h1v-39zM745 521v34h1v-34zM747 523v32h1v-32zM749 517v38h1v-38zM751 511v44h1v-44zM753 511v44h1v-44zM755 491v64h1v-64zM757 491v64h1v-64zM759 491v64h1v-64zM761 491v64h1v-64zM763 483v72h1v-72zM765 486v69h1v-69zM767 491v64h1v-64zM769 489v66h1v-66zM771 493v62h1v-62zM773 492v63h1v-63zM775 491v64h1v-64zM777 492v63h1v-63zM779 491v64h1v-64zM781 492v63h1v-63zM783 491v64h1v-64zM785 491v64h1v-64zM787 483v72h1v-72zM789 463v92h1v-92zM791 461v94h1v-94zM793 464v91h1v-91zM795 458v97h1v-97zM797 453v102h1v-102zM799 457v98h1v-98zM801 463v92h1v-92zM803 461v94h1v-94zM805 465v90h1v-90z" fill="#32cd32"/>
<line x1="10" y1="555.5" x2="986" y2="555.5" stroke="#ffff00" stroke-width="1" stroke-dasharray="9 6 3 6" shape-rendering="crispEdges"/>
<polyline points="301.2,556.2 303.8,560.0 306.2,566.2 308.8,562.5 311.2,570.0 313.8,590.0 316.2,610.0 318.0,625.0 320.0,615.0 322.5,595.0 324.5,565.0 326.2,545.0 327.5,542.5 328.8,562.5 331.2,561.2 333.8,565.0 335.5,580.0 337.5,587.5 339.0,582.5 341.2,595.0 343.8,597.5 346.2,595.0 348.0,590.0 351.2,606.2 353.8,590.0 356.2,592.5 359.5,615.0 362.0,595.0 364.5,570.0 367.5,556.2 369.5,568.8 372.0,557.5 374.5,551.2 378.8,545.0 381.2,535.0 383.2,530.5 386.2,537.5 388.0,545.0 390.0,563.8 392.5,570.0 395.0,565.0 397.5,566.2 399.5,570.0 400.9,575.7 403.5,605.4 407.3,587.9 409.6,594.0 411.3,591.4 414.8,594.9 417.4,601.0 420.9,580.9 423.5,571.3 425.3,582.7 427.9,610.6 430.5,629.8 433.1,655.9 435.8,643.7 437.5,650.7 439.8,637.6 441.9,654.2 443.6,664.7 445.0,670.8 445.7,664.7 448.0,685.6 449.7,687.0 451.5,680.4 453.2,679.5 455.5,670.8 457.2,680.4 459.3,668.1 461.9,662.9 463.7,664.7 465.4,666.8 467.2,665.5 469.4,664.7 470.3,657.7 471.2,629.8 472.4,617.6 474.1,610.6 477.6,605.0 479.4,612.3 481.1,622.8 483.4,611.5 485.5,608.0 487.2,609.7 489.8,605.4 492.4,594.0 494.2,607.1 495.9,612.3 498.6,608.0 501.2,601.9 502.9,608.8 504.7,609.7 507.3,598.4 509.9,590.5 512.5,597.5 514.3,614.1 515.5,621.9 517.7,612.3 520.4,609.7 523.0,613.2 524.7,612.3 527.3,610.6 529.9,621.9 532.6,610.6 535.2,606.2 537.8,601.9 539.5,589.7 541.6,576.6 543.9,584.4 546.2,583.5 548.3,582.7 550.9,591.4 553.5,592.3 555.2,591.4 557.9,579.2 559.5,576.0 560.0,576.0 561.9,577.9 563.9,586.6 565.8,595.0 568.7,592.4 571.6,593.4 574.5,585.7 576.5,572.1 578.4,568.6 580.3,571.1 582.3,574.0 585.2,583.7 587.1,574.0 589.1,571.1 591.0,576.0 592.9,577.9 594.9,579.8 596.8,574.0 599.7,568.2 601.7,580.8 603.6,574.0 605.5,567.2 607.5,564.3 609.4,562.4 610.8,566.3 612.3,574.0 614.3,579.8 617.2,587.6 620.1,583.7 623.0,576.0 624.9,566.3 626.9,550.8 627.8,545.0 629.8,542.1 632.7,539.1 634.6,533.3 636.6,531.4 638.5,523.6 639.5,514.9 641.4,514.9 642.9,527.5 645.3,523.3 647.2,522.7 649.1,527.5 651.1,526.6 653.0,533.3 655.0,541.1 656.5,548.8 657.9,554.7 659.8,549.8 661.7,551.7 663.7,544.0 666.2,543.0 668.5,545.9 670.5,551.7 671.4,555.6 673.4,545.9 674.7,544.0 676.3,527.5 677.8,519.8 679.8,520.7 681.7,519.4 684.0,514.9 686.0,512.0 686.8,510.0 687.8,491.0 689.3,477.4 691.6,475.5 693.6,471.6 695.1,474.5 696.5,465.8 697.4,456.1 699.0,469.7 700.3,464.8 702.9,466.7 705.2,463.8 707.1,461.9 709.1,481.3 711.0,473.5 713.3,471.2 714.9,475.5 717.2,483.2 719.1,481.3 720.7,469.7 721.7,464.8 723.0,472.6 725.0,465.8 726.5,463.8 728.1,460.0 729.4,457.6 731.9,461.9 735.2,466.7 738.1,467.1 742.0,466.7 744.0,465.8 745.5,469.3 746.9,458.0 747.8,446.4 748.8,436.7 750.2,429.9 752.7,428.0 754.0,423.1 755.6,409.6 757.1,399.9 758.5,411.5 759.5,415.4 761.4,411.5 763.7,409.6 765.3,397.6 766.2,403.8 767.6,408.6 769.5,404.7 771.1,406.7 774.0,403.4 776.9,405.7 779.2,410.5 780.8,406.7 782.7,415.4 784.7,422.2 787.2,428.0 788.5,413.4 789.5,401.8 791.4,397.0 793.0,403.8 794.3,388.3 795.7,377.6 797.2,375.7 799.2,382.4 801.1,389.2 803.1,388.6 805.0,388.3" fill="none" stroke="#ffd700" stroke-width="1" stroke-linejoin="round" shape-rendering="crispEdges"/>
</g>
<g shape-rendering="crispEdges" fill="#ffffff">
<rect x="8" y="46" width="979" height="1"/>
<rect x="8" y="356" width="979" height="1"/>
<rect x="8" y="46" width="1" height="310"/>
<rect x="986" y="46" width="1" height="310"/>
<rect x="8" y="358" width="979" height="1"/>
<rect x="8" y="703" width="979" height="1"/>
<rect x="8" y="358" width="1" height="345"/>
<rect x="986" y="358" width="1" height="345"/>
<rect x="987" y="66" width="2" height="1"/>
<rect x="987" y="98" width="2" height="1"/>
<rect x="987" y="130" width="2" height="1"/>
<rect x="987" y="162" width="2" height="1"/>
<rect x="987" y="194" width="2" height="1"/>
<rect x="987" y="226" width="2" height="1"/>
<rect x="987" y="258" width="2" height="1"/>
<rect x="987" y="290" width="2" height="1"/>
<rect x="987" y="322" width="2" height="1"/>
<rect x="987" y="354" width="2" height="1"/>
<rect x="987" y="354" width="2" height="1"/>
<rect x="987" y="555" width="2" height="1"/>
<rect x="9" y="704" width="1" height="3"/>
<rect x="73" y="704" width="1" height="3"/>
<rect x="137" y="704" width="1" height="3"/>
<rect x="201" y="704" width="1" height="3"/>
<rect x="265" y="704" width="1" height="3"/>
<rect x="329" y="704" width="1" height="3"/>
<rect x="393" y="704" width="1" height="3"/>
<rect x="457" y="704" width="1" height="3"/>
<rect x="521" y="704" width="1" height="3"/>
<rect x="585" y="704" width="1" height="3"/>
<rect x="649" y="704" width="1" height="3"/>
<rect x="713" y="704" width="1" height="3"/>
<rect x="777" y="704" width="1" height="3"/>
<rect x="987" y="702" width="2" height="1"/>
<rect x="988" y="74" width="31" height="11"/>
</g>
<text x="991.7" y="69" fill="#ffffff" font-size="10.4" textLength="23.7" lengthAdjust="spacingAndGlyphs">78.90</text>
<text x="991.7" y="101" fill="#ffffff" font-size="10.4" textLength="23.7" lengthAdjust="spacingAndGlyphs">77.65</text>
<text x="991.7" y="133" fill="#ffffff" font-size="10.4" textLength="23.7" lengthAdjust="spacingAndGlyphs">76.45</text>
<text x="991.7" y="165" fill="#ffffff" font-size="10.4" textLength="23.7" lengthAdjust="spacingAndGlyphs">75.20</text>
<text x="991.7" y="197" fill="#ffffff" font-size="10.4" textLength="23.7" lengthAdjust="spacingAndGlyphs">74.00</text>
<text x="991.7" y="229" fill="#ffffff" font-size="10.4" textLength="23.7" lengthAdjust="spacingAndGlyphs">72.75</text>
<text x="991.7" y="261" fill="#ffffff" font-size="10.4" textLength="23.7" lengthAdjust="spacingAndGlyphs">71.55</text>
<text x="991.7" y="293" fill="#ffffff" font-size="10.4" textLength="23.7" lengthAdjust="spacingAndGlyphs">70.30</text>
<text x="991.7" y="325" fill="#ffffff" font-size="10.4" textLength="23.7" lengthAdjust="spacingAndGlyphs">69.10</text>
<text x="991.7" y="357" fill="#ffffff" font-size="10.4" textLength="23.7" lengthAdjust="spacingAndGlyphs">67.85</text>
<text x="991.7" y="83" fill="#000000" font-size="10.4" textLength="23.7" lengthAdjust="spacingAndGlyphs">78.36</text>
<text x="990.7" y="369" fill="#ffffff" font-size="10.4" textLength="39.2" lengthAdjust="spacingAndGlyphs">19736.56</text>
<text x="990.3000000000001" y="558" fill="#ffffff" font-size="10.4" textLength="18.0" lengthAdjust="spacingAndGlyphs">0.00</text>
<text x="990.7" y="700" fill="#ffffff" font-size="10.4" textLength="38.2" lengthAdjust="spacingAndGlyphs">-14930.9</text>
<text x="8.7" y="716.3" fill="#ffffff" font-size="9.8" textLength="54.7" lengthAdjust="spacingAndGlyphs">19 May 2010</text>
<text x="71.7" y="716.3" fill="#ffffff" font-size="9.8" textLength="58.7" lengthAdjust="spacingAndGlyphs">21 May 13:05</text>
<text x="135.7" y="716.3" fill="#ffffff" font-size="9.8" textLength="58.7" lengthAdjust="spacingAndGlyphs">25 May 09:05</text>
<text x="199.7" y="716.3" fill="#ffffff" font-size="9.8" textLength="58.7" lengthAdjust="spacingAndGlyphs">27 May 05:05</text>
<text x="263.7" y="716.3" fill="#ffffff" font-size="9.8" textLength="58.7" lengthAdjust="spacingAndGlyphs">28 May 19:05</text>
<text x="327.7" y="716.3" fill="#ffffff" font-size="9.8" textLength="48.7" lengthAdjust="spacingAndGlyphs">1 Jun 17:05</text>
<text x="391.7" y="716.3" fill="#ffffff" font-size="9.8" textLength="48.7" lengthAdjust="spacingAndGlyphs">3 Jun 13:05</text>
<text x="455.7" y="716.3" fill="#ffffff" font-size="9.8" textLength="48.7" lengthAdjust="spacingAndGlyphs">7 Jun 09:05</text>
<text x="519.7" y="716.3" fill="#ffffff" font-size="9.8" textLength="48.7" lengthAdjust="spacingAndGlyphs">9 Jun 05:05</text>
<text x="583.7" y="716.3" fill="#ffffff" font-size="9.8" textLength="53.7" lengthAdjust="spacingAndGlyphs">10 Jun 19:05</text>
<text x="647.7" y="716.3" fill="#ffffff" font-size="9.8" textLength="53.7" lengthAdjust="spacingAndGlyphs">14 Jun 15:05</text>
<text x="711.7" y="716.3" fill="#ffffff" font-size="9.8" textLength="53.7" lengthAdjust="spacingAndGlyphs">16 Jun 11:05</text>
<text x="775.7" y="716.3" fill="#ffffff" font-size="9.8" textLength="53.7" lengthAdjust="spacingAndGlyphs">18 Jun 07:05</text>
<text x="12.7" y="58" fill="#ffffff" font-size="10.2" textLength="138.7" lengthAdjust="spacingAndGlyphs">OIL,H1  78.26 78.40 78.22 78.36</text>
<text x="14.7" y="97.5" fill="#ffffff" font-size="10.2" textLength="53.7" lengthAdjust="spacingAndGlyphs">#899487 sell</text>
<text x="40.0" y="372" fill="#ffffff" font-size="10.2" textLength="279.7" lengthAdjust="spacingAndGlyphs">HEDGE 1406.402 6346.800 9137.700 0.000 0.000 0.000 16890.902</text>
<text x="9.7" y="388.4" fill="#ffffff" font-size="10.5" textLength="75.2" lengthAdjust="spacingAndGlyphs">TRADED SINCE :</text>
<text x="9.7" y="403.4" fill="#ffffff" font-size="10.5" textLength="72.7" lengthAdjust="spacingAndGlyphs">2010.06.01 00:00</text>
<text x="9.7" y="418.4" fill="#ffffff" font-size="10.5" textLength="96.2" lengthAdjust="spacingAndGlyphs">STARTUP CAPITAL $ :</text>
<text x="124.4" y="418.4" fill="#ffffff" font-size="10.5" textLength="32.7" lengthAdjust="spacingAndGlyphs">1000.00</text>
<text x="9.7" y="448.4" fill="#ffffff" font-size="10.5" textLength="52.7" lengthAdjust="spacingAndGlyphs">LOT SIZES :</text>
<text x="9.7" y="458.4" fill="#ffffff" font-size="10.5" textLength="25.7" lengthAdjust="spacingAndGlyphs">PAIR1</text>
<text x="68.7" y="458.4" fill="#ffffff" font-size="10.5" textLength="27.7" lengthAdjust="spacingAndGlyphs">PAIR2</text>
<text x="129.1" y="458.4" fill="#ffffff" font-size="10.5" textLength="27.7" lengthAdjust="spacingAndGlyphs">PAIR3</text>
<text x="9.7" y="468.4" fill="#ff0000" font-size="10.5" textLength="39.7" lengthAdjust="spacingAndGlyphs">EURUSD</text>
<text x="68.7" y="468.4" fill="#0000ff" font-size="10.5" textLength="15.2" lengthAdjust="spacingAndGlyphs">OIL</text>
<text x="129.1" y="468.4" fill="#32cd32" font-size="10.5" textLength="25.7" lengthAdjust="spacingAndGlyphs">GOLD</text>
<text x="14.1" y="478.4" fill="#ffffff" font-size="10.5" textLength="18.7" lengthAdjust="spacingAndGlyphs">2.32</text>
<text x="68.7" y="478.4" fill="#ffffff" font-size="10.5" textLength="18.7" lengthAdjust="spacingAndGlyphs">0.86</text>
<text x="129.1" y="478.4" fill="#ffffff" font-size="10.5" textLength="18.7" lengthAdjust="spacingAndGlyphs">0.78</text>
<text x="9.7" y="493.4" fill="#ffffff" font-size="10.5" textLength="62.7" lengthAdjust="spacingAndGlyphs">ENTRY PRICE</text>
<text x="14.7" y="503.4" fill="#ffffff" font-size="10.5" textLength="27.7" lengthAdjust="spacingAndGlyphs">1.2297</text>
<text x="68.7" y="503.4" fill="#ffffff" font-size="10.5" textLength="28.7" lengthAdjust="spacingAndGlyphs">74.670</text>
<text x="129.1" y="503.4" fill="#ffffff" font-size="10.5" textLength="28.2" lengthAdjust="spacingAndGlyphs">1216.5</text>
<text x="9.7" y="526.4" fill="#ffffff" font-size="10.5" textLength="88.7" lengthAdjust="spacingAndGlyphs">SWAP INTEREST $ :</text>
<text x="148.7" y="526.4" fill="#ffffff" font-size="10.5" textLength="72.2" lengthAdjust="spacingAndGlyphs">SWAP PER DAY</text>
<text x="14.1" y="536.4" fill="#14f014" font-size="10.5" textLength="20.2" lengthAdjust="spacingAndGlyphs">-512.</text>
<text x="148.7" y="536.4" fill="#14f014" font-size="10.5" textLength="26.7" lengthAdjust="spacingAndGlyphs">-51.20</text>
<text x="9.7" y="551.4" fill="#ffffff" font-size="10.5" textLength="72.7" lengthAdjust="spacingAndGlyphs">TOTAL PROFIT $</text>
<text x="14.1" y="563.4" fill="#14f014" font-size="10.5" textLength="28.2" lengthAdjust="spacingAndGlyphs">16890.</text>
<text x="9.7" y="578.4" fill="#ffffff" font-size="10.5" textLength="33.7" lengthAdjust="spacingAndGlyphs">R.O.I %</text>
<text x="14.1" y="588.4" fill="#14f014" font-size="10.5" textLength="19.7" lengthAdjust="spacingAndGlyphs">1637</text>
<text x="48.7" y="597.9" fill="#ffffff" font-size="10.5" textLength="40.2" lengthAdjust="spacingAndGlyphs">EURUSD</text>
<text x="48.7" y="607.9" fill="#ffffff" font-size="10.5" textLength="15.2" lengthAdjust="spacingAndGlyphs">OIL</text>
<text x="48.7" y="617.8" fill="#ffffff" font-size="10.5" textLength="26.7" lengthAdjust="spacingAndGlyphs">GOLD</text>
<text x="129.1" y="597.9" fill="#32cd32" font-size="10.5" textLength="27.7" lengthAdjust="spacingAndGlyphs">1406.4</text>
<text x="129.1" y="607.9" fill="#32cd32" font-size="10.5" textLength="27.7" lengthAdjust="spacingAndGlyphs">6346.8</text>
<text x="129.1" y="617.8" fill="#32cd32" font-size="10.5" textLength="27.7" lengthAdjust="spacingAndGlyphs">9137.7</text>
<text x="14.7" y="648.0" fill="#32cd32" font-size="10.5" textLength="24.7" lengthAdjust="spacingAndGlyphs">16378</text>
<text x="49.7" y="648.0" fill="#ffffff" font-size="10.5" textLength="79.7" lengthAdjust="spacingAndGlyphs">OVERALL PROFIT</text>
<g shape-rendering="crispEdges">
<line x1="10" y1="595.5" x2="39" y2="595.5" stroke="#ff0000" stroke-width="1" stroke-dasharray="3 1" opacity="0.9"/>
<line x1="10" y1="605.5" x2="39" y2="605.5" stroke="#0000ff" stroke-width="1" stroke-dasharray="3 1" opacity="0.9"/>
<line x1="10" y1="615.5" x2="39" y2="615.5" stroke="#2a9a2a" stroke-width="1" stroke-dasharray="3 1" opacity="0.9"/>
</g>
<path d="M108.4 591.0l3.7 5.2h-2.7l-1-1.400l-1 1.400h-2.700z" fill="#32cd32"/>
<path d="M108.4 601.0l3.7 5.2h-2.7l-1-1.400l-1 1.400h-2.700z" fill="#32cd32"/>
<path d="M108.4 611.0l3.7 5.2h-2.7l-1-1.400l-1 1.400h-2.700z" fill="#32cd32"/>
<path d="M151.400 637.800l4.700 5.700h-2.800v6h-3.800v-6h-2.800z" fill="none" stroke="#32cd32" stroke-width="1.100"/>
<rect x="1026" y="42" width="2" height="679" fill="#d4d0c8"/>
<rect x="1028" y="0" width="4" height="748" fill="#fcfcfc"/>
</svg>
</body>
</html>
